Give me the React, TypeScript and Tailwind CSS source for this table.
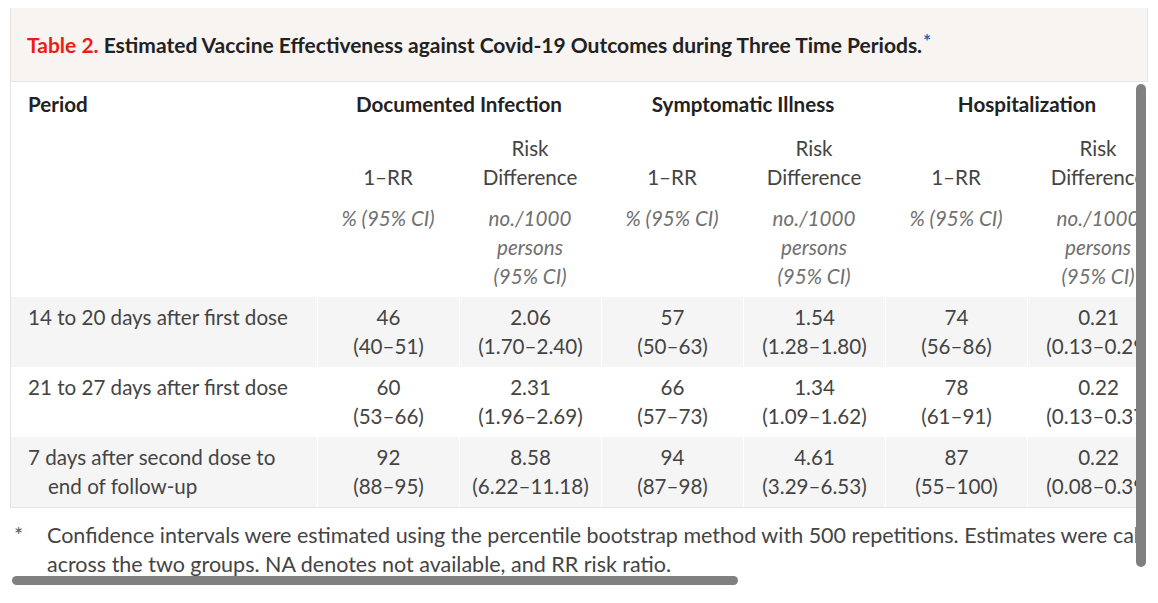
import React from "react";

const rows = [
  {
    period: ["14 to 20 days after first dose"],
    vals: [["46", "(40–51)"], ["2.06", "(1.70–2.40)"], ["57", "(50–63)"], ["1.54", "(1.28–1.80)"], ["74", "(56–86)"], ["0.21", "(0.13–0.29)"]],
    gray: true,
  },
  {
    period: ["21 to 27 days after first dose"],
    vals: [["60", "(53–66)"], ["2.31", "(1.96–2.69)"], ["66", "(57–73)"], ["1.34", "(1.09–1.62)"], ["78", "(61–91)"], ["0.22", "(0.13–0.37)"]],
    gray: false,
  },
  {
    period: ["7 days after second dose to", "end of follow-up"],
    vals: [["92", "(88–95)"], ["8.58", "(6.22–11.18)"], ["94", "(87–98)"], ["4.61", "(3.29–6.53)"], ["87", "(55–100)"], ["0.22", "(0.08–0.39)"]],
    gray: true,
  },
];

const groups = ["Documented Infection", "Symptomatic Illness", "Hospitalization"];

export default function App() {
  return (
    <div className="relative w-[1158px] h-[603px] bg-white overflow-hidden font-['Lato',sans-serif] text-[20.6px] leading-[29px] text-[#444]">
      {/* Caption */}
      <div className="ml-[10px] mt-[8px] w-[1138px] h-[74px] bg-[#f7f4f2] border-l border-r border-b border-[#e6e4e2] flex items-center pl-[16px]">
        <p className="font-bold text-[21px] text-[#222] whitespace-nowrap">
          <span className="text-[#ec1c10]">Table 2.</span> Estimated Vaccine Effectiveness against Covid-19 Outcomes during Three Time Periods.
          <sup className="text-[#1f5fbf] text-[19px] ml-[1px] font-bold relative top-[-5px]">*</sup>
        </p>
      </div>

      {/* Scroll viewport */}
      <div className="ml-[10px] w-[1126px] overflow-hidden">
        <div className="w-[1760px]">
          <div className="w-[1165px] border-l border-b border-[#e4e4e4]">
            {/* Header row 1 */}
            <div className="grid grid-cols-[306px_284px_284px_284px] pt-[8px]">
              <div className="pl-[17px] font-bold text-[#222]">Period</div>
              {groups.map((g) => (
                <div key={g} className="text-center font-bold text-[#222]">
                  {g}
                </div>
              ))}
            </div>
            {/* Header row 2 */}
            <div className="grid grid-cols-[306px_repeat(6,142px)] pt-[15px] items-end">
              <div />
              {[0, 1, 2].map((i) => (
                <React.Fragment key={i}>
                  <div className="text-center">1–RR</div>
                  <div className="text-center">
                    Risk
                    <br />
                    Difference
                  </div>
                </React.Fragment>
              ))}
            </div>
            {/* Header row 3 */}
            <div className="grid grid-cols-[306px_repeat(6,142px)] pt-[12px] pb-[6px] items-start italic text-[#707070]">
              <div />
              {[0, 1, 2].map((i) => (
                <React.Fragment key={i}>
                  <div className="text-center">% (95% CI)</div>
                  <div className="text-center">
                    no./1000
                    <br />
                    persons
                    <br />
                    (95% CI)
                  </div>
                </React.Fragment>
              ))}
            </div>
            {/* Data rows */}
            {rows.map((r, ri) => (
              <div
                key={ri}
                className={`grid grid-cols-[306px_repeat(6,142px)] h-[70px] ${r.gray ? "bg-[#f5f5f5]" : "bg-white"}`}
              >
                <div className="pl-[17px] pt-[6px]">
                  {r.period.map((p, pi) => (
                    <div key={pi} className={pi > 0 ? "pl-[20px]" : ""}>
                      {p}
                    </div>
                  ))}
                </div>
                {r.vals.map((v, vi) => (
                  <div key={vi} className="text-center pt-[6px] border-l border-white whitespace-nowrap">
                    <div>{v[0]}</div>
                    <div>{v[1]}</div>
                  </div>
                ))}
              </div>
            ))}
          </div>
          {/* Footnote */}
          <div className="flex pt-[13px] whitespace-nowrap text-[21.5px]">
            <div className="w-[37px] pl-[4px] text-[#555]">*</div>
            <div>
              Confidence intervals were estimated using the percentile bootstrap method with 500 repetitions. Estimates were calculated
              <br />
              across the two groups. NA denotes not available, and RR risk ratio.
            </div>
          </div>
        </div>
      </div>

      {/* Scrollbars (overlay) */}
      <div className="absolute left-[1136px] top-[84px] w-[10px] h-[483px] rounded-full bg-[#808080]" />
      <div className="absolute left-[12px] top-[576px] w-[726px] h-[9px] rounded-full bg-[#808080]" />
    </div>
  );
}
